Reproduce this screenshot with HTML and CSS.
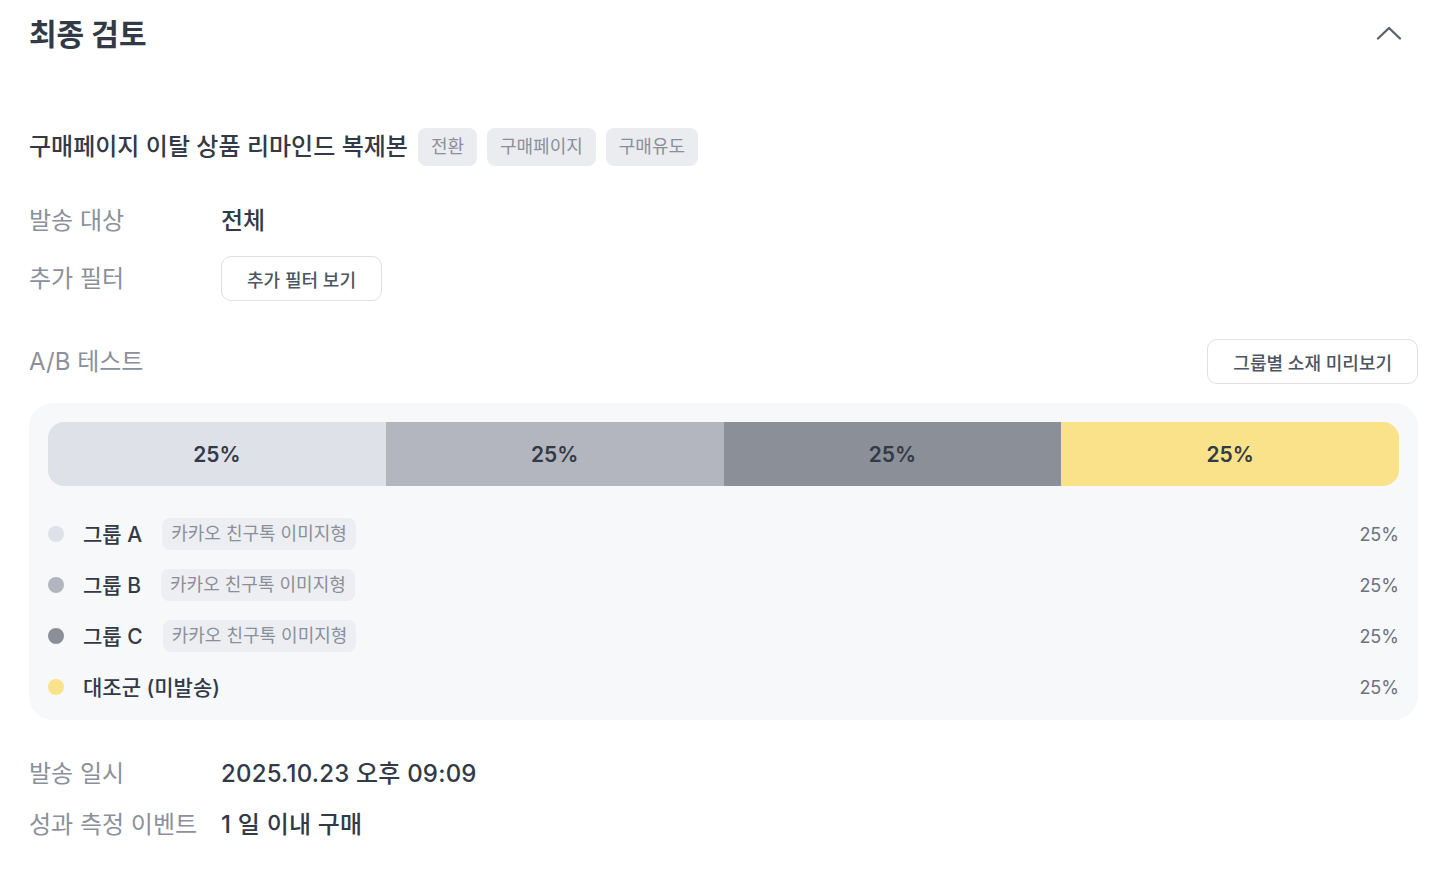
FILE: index.html
```html
<!DOCTYPE html>
<html lang="ko">
<head>
<meta charset="utf-8">
<link rel="stylesheet" href="styles.css">
</head>
<body>
<div class="page">
  <header class="header">
    <h1 class="title">최종 검토</h1>
    <svg class="chevron" width="26" height="16" viewBox="0 0 26 16"><polyline points="2,13.5 13,3 24,13.5" fill="none" stroke="#5c6270" stroke-width="2.4" stroke-linecap="round" stroke-linejoin="round"/></svg>
  </header>

  <div class="campaign">
    <span class="campaign-name">구매페이지 이탈 상품 리마인드 복제본</span>
    <span class="tag">전환</span>
    <span class="tag">구매페이지</span>
    <span class="tag">구매유도</span>
  </div>

  <div class="info-row row-target">
    <span class="label">발송 대상</span>
    <span class="value">전체</span>
  </div>
  <div class="info-row row-filter">
    <span class="label">추가 필터</span>
    <button class="btn">추가 필터 보기</button>
  </div>

  <div class="ab-head">
    <span class="label">A/B 테스트</span>
    <button class="btn">그룹별 소재 미리보기</button>
  </div>

  <section class="ab-card">
    <div class="bar">
      <div class="seg seg-a">25%</div>
      <div class="seg seg-b">25%</div>
      <div class="seg seg-c">25%</div>
      <div class="seg seg-d">25%</div>
    </div>
    <ul class="legend">
      <li class="legend-row">
        <span class="dot dot-a"></span>
        <span class="group-name">그룹 A</span>
        <span class="chip">카카오 친구톡 이미지형</span>
        <span class="pct">25%</span>
      </li>
      <li class="legend-row">
        <span class="dot dot-b"></span>
        <span class="group-name">그룹 B</span>
        <span class="chip">카카오 친구톡 이미지형</span>
        <span class="pct">25%</span>
      </li>
      <li class="legend-row">
        <span class="dot dot-c"></span>
        <span class="group-name">그룹 C</span>
        <span class="chip">카카오 친구톡 이미지형</span>
        <span class="pct">25%</span>
      </li>
      <li class="legend-row">
        <span class="dot dot-d"></span>
        <span class="group-name">대조군 (미발송)</span>
        <span class="pct">25%</span>
      </li>
    </ul>
  </section>

  <div class="info-row row-date">
    <span class="label">발송 일시</span>
    <span class="value value-lg">2025.10.23 오후 09:09</span>
  </div>
  <div class="info-row row-event">
    <span class="label">성과 측정 이벤트</span>
    <span class="value value-lg">1 일 이내 구매</span>
  </div>
</div>
</body>
</html>
```

FILE: styles.css
```css
* { box-sizing: border-box; }
html, body {
  margin: 0;
  padding: 0;
  background: #ffffff;
}
body {
  font-family: Inter, "Noto Sans CJK KR", "Noto Sans", sans-serif;
  color: #333a47;
}
.page {
  display: flex;
  flex-direction: column;
  padding: 0 34px 0 29px;
}
.header {
  height: 68px;
  display: flex;
  align-items: center;
  justify-content: space-between;
  padding-right: 16px;
}
.title {
  margin: 0;
  font-size: 30px;
  font-weight: 700;
  line-height: 1;
  color: #333a47;
}
.chevron { display: block; margin-top: -2px; }

.campaign {
  margin-top: 60px;
  height: 38px;
  display: flex;
  align-items: center;
  gap: 10px;
}
.campaign-name {
  font-size: 24px;
  font-weight: 500;
  color: #333a47;
  line-height: 1;
}
.tag {
  height: 38px;
  display: inline-flex;
  align-items: center;
  padding: 0 13px;
  border-radius: 8px;
  background: #ebecf0;
  color: #8b8f99;
  font-size: 18px;
  line-height: 1;
}

.info-row {
  display: flex;
  align-items: center;
}
.label {
  width: 192px;
  flex: none;
  font-size: 24px;
  color: #8b909a;
  line-height: 1;
}
.value {
  font-size: 24px;
  font-weight: 500;
  color: #333a47;
  line-height: 1;
}
.value-lg { font-size: 24px; letter-spacing: 0.2px; }
.row-target { margin-top: 40px; height: 30px; }
.row-filter { margin-top: 20px; height: 45px; }

.btn {
  height: 45px;
  padding: 0 25px;
  border: 1px solid #dcdfe6;
  border-radius: 10px;
  background: #ffffff;
  font-family: inherit;
  font-size: 18px;
  font-weight: 500;
  color: #4e5562;
  cursor: pointer;
}

.ab-head {
  margin-top: 38px;
  height: 45px;
  display: flex;
  align-items: center;
  justify-content: space-between;
}

.ab-card {
  margin-top: 19px;
  background: #f7f8fa;
  border-radius: 24px;
  padding: 19px 19px 17px;
}
.bar {
  display: flex;
  height: 64px;
  border-radius: 16px;
  overflow: hidden;
}
.seg {
  flex: 1;
  display: flex;
  align-items: center;
  justify-content: center;
  font-size: 21px;
  font-weight: 600;
  color: #333a47;
}
.seg-a { background: #dfe1e8; }
.seg-b { background: #b3b6be; }
.seg-c { background: #8b8f98; }
.seg-d { background: #fae28b; }

.legend {
  list-style: none;
  margin: 32px 0 0;
  padding: 0;
  display: flex;
  flex-direction: column;
  gap: 19px;
}
.legend-row {
  height: 32px;
  display: flex;
  align-items: center;
}
.dot {
  width: 16px;
  height: 16px;
  border-radius: 50%;
  flex: none;
  margin-right: 19px;
}
.dot-a { background: #dfe1e8; }
.dot-b { background: #b3b6be; }
.dot-c { background: #8b8f98; }
.dot-d { background: #fae28b; }
.group-name {
  font-size: 21px;
  font-weight: 500;
  color: #333a47;
  line-height: 1;
  margin-right: 20px;
}
.chip {
  height: 32px;
  display: inline-flex;
  align-items: center;
  padding: 0 9px;
  border-radius: 8px;
  background: #eceef2;
  color: #8b8f99;
  font-size: 18px;
  line-height: 1;
}
.pct {
  margin-left: auto;
  font-size: 18px;
  color: #6b7280;
  line-height: 1;
  padding-top: 2px;
}

.row-date { margin-top: 37px; height: 34px; }
.row-event { margin-top: 17px; height: 34px; }
```
